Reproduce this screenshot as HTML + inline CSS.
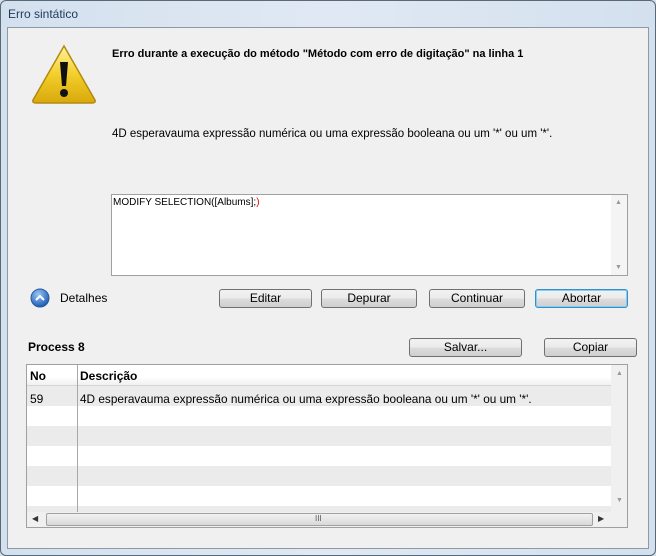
<!DOCTYPE html>
<html><head><meta charset="utf-8"><style>
*{margin:0;padding:0;box-sizing:border-box}
body{width:656px;height:556px;background:#d6e2ee;font-family:"Liberation Sans",sans-serif;font-size:12px;color:#000;position:relative;overflow:hidden}
.frame{position:absolute;left:0;top:0;width:656px;height:556px;border:1px solid #5a6878;border-radius:6px;background:linear-gradient(90deg,#d3e0ee,#e0e9f3 50%,#d3e0ee)}
.title{position:absolute;left:8px;top:7px;font-size:12px;color:#1e3a5a}
.content{position:absolute;left:7px;top:27px;width:642px;height:522px;background:#f0f0f0;border:1px solid #8c9aa8}
.a{position:absolute;white-space:nowrap}
.btn{position:absolute;height:19px;border:1px solid #707070;border-radius:3px;background:linear-gradient(#f2f2f2,#ebebeb 50%,#dddddd 50%,#cfcfcf);text-align:center;line-height:17px;font-size:12px}
.ta{position:absolute;left:111px;top:194px;width:517px;height:82px;background:#fff;border:1px solid #a0a0a0}
.vs{position:absolute;right:0;top:0;width:16px;height:100%;background:#f4f4f4}
.tbl{position:absolute;left:26px;top:364px;width:602px;height:164px;border:1px solid #a0a0a0;background:#fff;overflow:hidden}
.row{position:absolute;left:0;width:584px;height:20px}
</style></head><body>
<div class="frame"></div>
<div class="title">Erro sintático</div>
<div class="content"></div>
<svg class="a" style="left:31px;top:44px" width="66" height="60" viewBox="0 0 66 60">
<defs><linearGradient id="g" x1="0" y1="0" x2="0" y2="1"><stop offset="0" stop-color="#fff3a0"/><stop offset=".5" stop-color="#f2cf2a"/><stop offset="1" stop-color="#d9a80c"/></linearGradient></defs>
<path d="M33 2 L64 56 Q65 59 61 59 L5 59 Q1 59 2 56 Z" fill="url(#g)" stroke="#b28a10" stroke-width="1.5"/>
<path d="M29 18 L37 18 L35 42 L31 42 Z" fill="#111"/>
<circle cx="33" cy="49" r="4" fill="#111"/>
</svg>
<div class="a" style="left:112px;top:48px;font-weight:bold;font-size:11px">Erro durante a execução do método "Método com erro de digitação" na linha 1</div>
<div class="a" style="left:112px;top:128px;font-size:11.5px">4D esperavauma expressão numérica ou uma expressão booleana ou um '*' ou um '*'.</div>
<div class="ta"><div class="a" style="left:1px;top:2px;font-size:10px">MODIFY SELECTION([Albums];<span style="color:#e00">)</span></div>
<div class="vs"><div class="a" style="left:4px;top:4px;font-size:7px;color:#999">▲</div><div class="a" style="left:4px;bottom:4px;font-size:7px;color:#999">▼</div></div></div>
<svg class="a" style="left:30px;top:288px" width="20" height="20"><defs><radialGradient id="b" cx=".4" cy=".3" r=".7"><stop offset="0" stop-color="#9cc6f4"/><stop offset="1" stop-color="#1c5cb8"/></radialGradient></defs><circle cx="10" cy="10" r="9" fill="url(#b)" stroke="#2a5a9a"/><path d="M6 12 L10 8 L14 12" fill="none" stroke="#fff" stroke-width="2"/></svg>
<div class="a" style="left:60px;top:291px">Detalhes</div>
<div class="btn" style="left:219px;top:289px;width:93px">Editar</div>
<div class="btn" style="left:321px;top:289px;width:96px">Depurar</div>
<div class="btn" style="left:429px;top:289px;width:96px">Continuar</div>
<div class="btn" style="left:535px;top:289px;width:93px;border-color:#3c8cc8;box-shadow:inset 0 0 0 1px #7ed0f4">Abortar</div>
<div class="a" style="left:28px;top:340px;font-weight:bold">Process 8</div>
<div class="btn" style="left:409px;top:338px;width:113px">Salvar...</div>
<div class="btn" style="left:544px;top:338px;width:93px">Copiar</div>
<div class="tbl">
<div class="row" style="top:0;height:21px;background:linear-gradient(#fff,#fff 60%,#f0f0f0);border-bottom:1px solid #d5d5d5"></div>
<div class="a" style="left:3px;top:4px;font-weight:bold">No</div>
<div class="a" style="left:53px;top:4px;font-weight:bold">Descrição</div>
<div class="row" style="top:21px;background:#ebebeb"></div>
<div class="row" style="top:61px;background:#ebebeb"></div>
<div class="row" style="top:101px;background:#ebebeb"></div>
<div class="row" style="top:141px;background:#ebebeb"></div>
<div class="a" style="left:3px;top:27px">59</div>
<div class="a" style="left:53px;top:27px;font-size:11.8px">4D esperavauma expressão numérica ou uma expressão booleana ou um '*' ou um '*'.</div>
<div class="a" style="left:50px;top:0;width:1px;height:147px;background:#a8a8a8"></div>
<div class="a" style="left:584px;top:0;width:17px;height:162px;background:#f0f0f0"><div class="a" style="left:5px;top:5px;font-size:7px;color:#999">▲</div><div class="a" style="left:5px;top:132px;font-size:7px;color:#999">▼</div></div>
<div class="a" style="left:0;top:147px;width:584px;height:15px;background:#f0f0f0"><div class="a" style="left:5px;top:2px;font-size:8px;color:#333">◀</div><div class="a" style="left:19px;top:1px;width:547px;height:13px;border:1px solid #a0a0a0;border-radius:2px;background:linear-gradient(#f2f2f2,#d8d8d8)"><div class="a" style="left:268px;top:0;font-size:8px;color:#555">III</div></div><div class="a" style="left:571px;top:2px;font-size:8px;color:#333">▶</div></div>
</div>
</body></html>
